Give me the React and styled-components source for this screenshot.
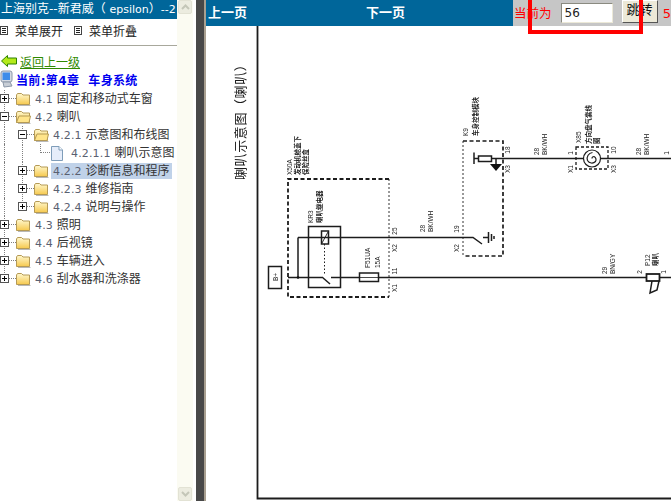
import React from 'react'
import styled, { createGlobalStyle } from 'styled-components'

const CJK = '"Noto Sans CJK SC", sans-serif'
const LATIN = `"DejaVu Sans", ${CJK}`

const GlobalStyle = createGlobalStyle`
  html, body {
    margin: 0;
    padding: 0;
    height: 100%;
    overflow: hidden;
    background: #fff;
    font-family: ${LATIN};
  }
`

const TREE = [
  { id: '4.1', name: '固定和移动式车窗', depth: 0, kind: 'plus', guides: [] },
  { id: '4.2', name: '喇叭', depth: 0, kind: 'minus', open: true, guides: [] },
  { id: '4.2.1', name: '示意图和布线图', depth: 1, kind: 'minus', open: true, guides: [true] },
  { id: '4.2.1.1', name: '喇叭示意图', depth: 2, kind: 'leaf', doc: true, last: true, guides: [true, true] },
  { id: '4.2.2', name: '诊断信息和程序', depth: 1, kind: 'plus', selected: true, guides: [true] },
  { id: '4.2.3', name: '维修指南', depth: 1, kind: 'plus', guides: [true] },
  { id: '4.2.4', name: '说明与操作', depth: 1, kind: 'plus', last: true, guides: [true] },
  { id: '4.3', name: '照明', depth: 0, kind: 'plus', guides: [] },
  { id: '4.4', name: '后视镜', depth: 0, kind: 'plus', guides: [] },
  { id: '4.5', name: '车辆进入', depth: 0, kind: 'plus', guides: [] },
  { id: '4.6', name: '刮水器和洗涤器', depth: 0, kind: 'plus', last: true, guides: [] },
]

function TreeGlyph({ kind, last }) {
  const leaf = kind === 'leaf'
  return (
    <GlyphSvg width={leaf ? 15 : 16} height="18" viewBox={`0 0 ${leaf ? 15 : 16} 18`}>
      <g stroke="#808080" strokeDasharray="1 1" shapeRendering="crispEdges">
        <line x1="4.5" y1="0" x2="4.5" y2={last ? 9 : 18} />
        <line x1="5" y1="8.5" x2={leaf ? 15 : 16} y2="8.5" />
      </g>
      {!leaf && (
        <g shapeRendering="crispEdges">
          <rect x="0.5" y="4.5" width="8" height="8" fill="#fff" stroke="#555" />
          <line x1="2" y1="8.5" x2="7" y2="8.5" stroke="#000" />
          {kind === 'plus' && <line x1="4.5" y1="6" x2="4.5" y2="11" stroke="#000" />}
        </g>
      )}
    </GlyphSvg>
  )
}

function Folder({ open }) {
  return (
    <IconSvg width="15" height="14" viewBox="0 0 15 14">
      <defs>
        <linearGradient id="folderFill" x1="0" y1="0" x2="0" y2="1">
          <stop offset="0" stopColor="#fff8cf" />
          <stop offset="1" stopColor="#f6c94e" />
        </linearGradient>
      </defs>
      <path d="M0.5 3 L1.5 1.5 H5.5 L7 3 H13.5 V12.5 H0.5 Z" fill="url(#folderFill)" stroke="#b59a55" />
      {open && <path d="M0.5 12.5 L3 6 H14.5 L13 12.5 Z" fill="#ffe489" stroke="#b59a55" />}
      <line x1="2" y1="13.5" x2="14.5" y2="13.5" stroke="#b8b8b8" />
    </IconSvg>
  )
}

function DocIcon() {
  return (
    <IconSvg width="13" height="15" viewBox="0 0 13 15">
      <path d="M0.5 0.5 H8 L11.5 4 V14.5 H0.5 Z" fill="#e6edfa" stroke="#7f9db9" />
      <path d="M8 0.5 V4 H11.5" fill="#fff" stroke="#7f9db9" />
    </IconSvg>
  )
}

function MenuIcon() {
  return (
    <svg width="8" height="9" viewBox="0 0 8 9" shapeRendering="crispEdges">
      <rect x="0.5" y="0.5" width="7" height="8" fill="#fff" stroke="#444" />
      <path d="M2 2.5 H6 M2 4.5 H6 M2 6.5 H6" stroke="#222" />
    </svg>
  )
}

function BackArrow() {
  return (
    <svg width="16" height="12" viewBox="0 0 16 12">
      <path d="M0.5 6 L6.5 0.5 V3 H15.5 V9 H6.5 V11.5 Z" fill="#b4ea1a" stroke="#2f8200" />
    </svg>
  )
}

function ComputerIcon() {
  return (
    <svg width="14" height="18" viewBox="0 0 14 18">
      <rect x="1" y="1" width="11" height="11" rx="2" fill="#d5dbe4" stroke="#8c98a8" />
      <rect x="2.5" y="2.5" width="7.5" height="7.5" fill="#3d8cea" />
      <path d="M3 12 L10 12 L12 16 L4 17 Z" fill="#c8ced6" stroke="#8c98a8" />
    </svg>
  )
}

function Rot({ x, y, size = 6.5, bold, middle, children }) {
  return (
    <DiagramText
      transform={`rotate(-90 ${x} ${y})`}
      x={x}
      y={y}
      fontSize={size}
      fontWeight={bold ? 700 : 400}
      textAnchor={middle ? 'middle' : 'start'}
    >
      {children}
    </DiagramText>
  )
}

function Wiring() {
  return (
    <DiagramSvg width="465" height="475" viewBox="206 26 465 475">
      <g fill="none" stroke="#1c1c1c" strokeWidth="1.5">
        {/* sheet frame */}
        <path d="M257.5 26 V498.5 H671" strokeWidth="1.8" />

        {/* fuse block */}
        <path d="M389 179 H288 V297 H389" strokeWidth="1.8" strokeDasharray="4 2.5" />
        <path d="M389 179 V297" strokeWidth="0.9" strokeDasharray="2 2" />
        <rect x="268.5" y="266.5" width="13" height="22" />

        {/* relay */}
        <rect x="308.5" y="226.5" width="32" height="61" />
        <rect x="321.5" y="231" width="7" height="13" />
        <path d="M322 243 L328 232" strokeWidth="0.9" />
        <path d="M324.5 244 V275" strokeWidth="1" strokeDasharray="1.5 2" />
        <path d="M298 237.5 H473 L482 244" />
        <path d="M298 237.5 V277" />
        <path d="M322 277 L330 284" />
        <path d="M288 277.5 H322 M331 277.5 H359 M379 277.5 H646 M660 277.5 H671" />
        <rect x="359.5" y="273" width="19" height="8.5" />
        <path d="M379 277.5 H359" strokeWidth="0.8" />

        {/* body control module */}
        <path d="M463 141 H503 V256 H463" strokeWidth="1.7" strokeDasharray="4 2.5" />
        <path d="M463 141 V256" strokeWidth="0.9" strokeDasharray="2 2" />
        <path d="M474 152.5 V164" />
        <path d="M474 158.5 H478 M491 158.5 H671" />
        <rect x="478.5" y="156" width="13" height="5.5" />
        <path d="M496 158.5 V165" />
        <path d="M483 237.5 H488 M488.5 232 V243 M491.5 234 V241 M494 236 V239" />

        {/* steering wheel coil */}
        <rect x="576" y="147" width="32" height="22" strokeWidth="1.3" strokeDasharray="3 2" />
        <circle cx="592" cy="158.5" r="8.5" fill="#fff" strokeWidth="1.2" />
        <path d="M592 158.5 a2 2 0 0 1 2 -2 a3.5 3.5 0 0 1 1.5 5 a5 5 0 0 1 -8 -1 a6 6 0 0 1 5 -8" strokeWidth="1.2" />

        {/* horn */}
        <rect x="646.5" y="274" width="13" height="7" strokeWidth="1.8" />
        <path d="M652 281 L650 293 L657 290 L659 281" />
      </g>
      <path d="M490 164 H502 L496 171 Z" fill="#111" />
      <circle cx="298" cy="277.5" r="1.3" fill="#111" />

      <DiagramText
        transform="rotate(-90 245 180)"
        x="245"
        y="180"
        fontSize="13"
        letterSpacing="0.6"
      >
        喇叭示意图（喇叭）
      </DiagramText>

      <Rot x={292} y={175}>X50A</Rot>
      <Rot x={300} y={175} bold>发动机舱盖下</Rot>
      <Rot x={308} y={175} bold>保险丝盒</Rot>
      <Rot x={313} y={223}>KR3</Rot>
      <Rot x={322} y={223} bold>喇叭继电器</Rot>
      <Rot x={278} y={277} middle>B+</Rot>
      <Rot x={370} y={268}>F51UA</Rot>
      <Rot x={380} y={268}>15A</Rot>
      <Rot x={397} y={231} middle>25</Rot>
      <Rot x={397} y={248} middle>X2</Rot>
      <Rot x={397} y={271} middle>11</Rot>
      <Rot x={397} y={288} middle>X1</Rot>
      <Rot x={425} y={232}>28</Rot>
      <Rot x={433} y={232}>BK/WH</Rot>
      <Rot x={459} y={229} middle>19</Rot>
      <Rot x={459} y={248} middle>X2</Rot>
      <Rot x={468} y={136}>K9</Rot>
      <Rot x={478} y={136} bold>车身控制模块</Rot>
      <Rot x={510} y={150} middle>18</Rot>
      <Rot x={510} y={169} middle>X3</Rot>
      <Rot x={539} y={155}>28</Rot>
      <Rot x={547} y={155}>BK/WH</Rot>
      <Rot x={573} y={153} middle>1</Rot>
      <Rot x={573} y={169} middle>X1</Rot>
      <Rot x={581} y={143}>X85</Rot>
      <Rot x={591} y={144} bold>方向盘气囊线</Rot>
      <Rot x={599} y={144} bold>圈</Rot>
      <Rot x={616} y={150} middle>10</Rot>
      <Rot x={616} y={169} middle>X3</Rot>
      <Rot x={641} y={155}>28</Rot>
      <Rot x={649} y={155}>BK/WH</Rot>
      <Rot x={669} y={153} middle>1</Rot>
      <Rot x={607} y={274}>29</Rot>
      <Rot x={615} y={274}>BN/GY</Rot>
      <Rot x={642} y={272} middle>2</Rot>
      <Rot x={650} y={266}>P12</Rot>
      <Rot x={658} y={266} bold>喇叭</Rot>
      <Rot x={666} y={272} middle>1</Rot>
    </DiagramSvg>
  )
}

export default function App() {
  return (
    <>
      <GlobalStyle />
      <Page>
        <Sidebar>
          <SideTitle>上海别克--新君威（ <TitleLatin>epsilon</TitleLatin>）<TitleLatin>--2</TitleLatin></SideTitle>
          <MenuBar>
            <MenuItem><MenuIcon />菜单展开</MenuItem>
            <MenuItem><MenuIcon />菜单折叠</MenuItem>
          </MenuBar>
          <BackRow>
            <BackArrow />
            <BackLink>返回上一级</BackLink>
          </BackRow>
          <CurrentRow>
            <ComputerIcon />
            <CurrentText>当前:第4章&nbsp; 车身系统</CurrentText>
          </CurrentRow>
          <Tree>
            {TREE.map(node => (
              <Row key={node.id}>
                {node.guides.map((on, i) => <Guide key={i} $on={on} />)}
                <TreeGlyph kind={node.kind} last={node.last} />
                {node.doc ? <DocIcon /> : <Folder open={node.open} />}
                <Label $selected={node.selected} $doc={node.doc}>
                  <Num>{node.id}</Num> {node.name}
                </Label>
              </Row>
            ))}
          </Tree>
        </Sidebar>

        <Scrollbar>
          <ScrollButton>
            <svg width="9" height="6" viewBox="0 0 9 6">
              <path d="M1 5 L4.5 1.5 L8 5" fill="none" stroke="#c4c6b8" strokeWidth="2" />
            </svg>
          </ScrollButton>
          <ScrollButton>
            <svg width="9" height="6" viewBox="0 0 9 6">
              <path d="M1 1 L4.5 4.5 L8 1" fill="none" stroke="#c4c6b8" strokeWidth="2" />
            </svg>
          </ScrollButton>
        </Scrollbar>
        <FrameGap />
        <Splitter />

        <Main>
          <Toolbar>
            <PageNav>
              <NavLink>上一页</NavLink>
              <NavLink>下一页</NavLink>
            </PageNav>
            <JumpBar>
              <JumpLabel>当前为</JumpLabel>
              <PageInput readOnly value="56" />
              <JumpButton>跳转</JumpButton>
              <TotalText>5</TotalText>
            </JumpBar>
            <RedMark />
          </Toolbar>
          <Sheet>
            <Wiring />
          </Sheet>
        </Main>
      </Page>
    </>
  )
}

const Page = styled.div`
  width: 671px;
  height: 501px;
  display: flex;
  overflow: hidden;
  background: #fff;
`

const Sidebar = styled.div`
  width: 177px;
  flex: none;
  overflow: hidden;
  font-size: 12px;
  color: #333;
`

const SideTitle = styled.div`
  height: 19px;
  line-height: 19px;
  padding-left: 1px;
  background: #00669a;
  color: #fff;
  white-space: nowrap;
  overflow: hidden;
`

const TitleLatin = styled.span`
  font-size: 11px;
`

const MenuBar = styled.div`
  height: 27px;
  display: flex;
  align-items: center;
  gap: 12px;
  padding: 0 0 4px 0;
  box-sizing: border-box;
  border-bottom: 1px solid #a8a89c;
  margin-bottom: 6px;
`

const MenuItem = styled.div`
  display: flex;
  align-items: center;
  gap: 7px;
  color: #222;
  &:last-child { margin-left: -1px; }
`

const BackRow = styled.div`
  height: 18px;
  display: flex;
  align-items: center;
  gap: 3px;
  padding-left: 1px;
`

const BackLink = styled.a`
  color: #2f8a00;
  text-decoration: underline;
`

const CurrentRow = styled.div`
  height: 18px;
  display: flex;
  align-items: center;
  gap: 2px;
`

const CurrentText = styled.span`
  color: #0000f0;
  font-weight: 700;
  letter-spacing: 0.35px;
  white-space: nowrap;
`

const Tree = styled.div`
  display: flex;
  flex-direction: column;
  margin-top: 2px;
`

const Row = styled.div`
  height: 18px;
  display: flex;
  align-items: center;
  white-space: nowrap;
`

const Guide = styled.span`
  flex: none;
  width: 14px;
  height: 18px;
  margin-left: 4px;
  box-sizing: border-box;
  border-left: ${p => (p.$on ? '1px dotted #808080' : 'none')};
`

const GlyphSvg = styled.svg`
  flex: none;
  display: block;
`

const IconSvg = styled.svg`
  flex: none;
  display: block;
`

const Label = styled.span`
  margin-left: ${p => (p.$doc ? '5px' : '2px')};
  padding: 0 2px;
  height: 16px;
  line-height: 16px;
  color: #333;
  background: ${p => (p.$selected ? '#c0d2e9' : 'transparent')};
`

const Num = styled.span`
  font-size: 11px;
  letter-spacing: 0.15px;
  color: #5a6070;
`

const Scrollbar = styled.div`
  width: 16px;
  flex: none;
  display: flex;
  flex-direction: column;
  justify-content: space-between;
  background: #fbfbf2;
`

const ScrollButton = styled.div`
  height: 14px;
  margin: 0 1px;
  display: flex;
  align-items: center;
  justify-content: center;
  background: #ecece0;
  border: 1px solid #e2e2d4;
  border-radius: 2px;
  box-sizing: border-box;
`

const FrameGap = styled.div`
  width: 3px;
  flex: none;
  background: #fff;
`

const Splitter = styled.div`
  width: 8px;
  flex: none;
  background: #484848;
  border-right: 2px solid #a89f90;
`

const Main = styled.div`
  flex: 1;
  min-width: 0;
  display: flex;
  flex-direction: column;
`

const Toolbar = styled.div`
  position: relative;
  height: 26px;
  flex: none;
  display: flex;
`

const PageNav = styled.div`
  width: 307px;
  flex: none;
  display: flex;
  align-items: center;
  gap: 119px;
  padding: 0 0 4px 2px;
  box-sizing: border-box;
  background: #00669a;
`

const NavLink = styled.a`
  color: #fff;
  font-size: 13px;
  font-weight: 700;
`

const JumpBar = styled.div`
  flex: 1;
  display: flex;
  align-items: flex-start;
  background: #c6c6c6;
  white-space: nowrap;
  overflow: hidden;
`

const JumpLabel = styled.span`
  margin: 4px 9px 0 1px;
  color: #f00;
  font-size: 12.5px;
  line-height: 20px;
`

const PageInput = styled.input`
  width: 52px;
  height: 20px;
  margin: 3px 9px 0 0;
  padding: 0 0 0 3px;
  box-sizing: border-box;
  border: 1px solid #8a8a80;
  border-right-color: #ece9d8;
  border-bottom-color: #ece9d8;
  background: #fff;
  color: #222;
  font-family: ${LATIN};
  font-size: 12px;
  outline: none;
`

const JumpButton = styled.button`
  width: 38px;
  height: 23px;
  margin: 0 5px 0 0;
  padding: 0 0 6px;
  box-sizing: border-box;
  background: #ece9d8;
  border: 1px solid #fff;
  border-right-color: #555;
  border-bottom-color: #555;
  color: #111;
  font-family: ${CJK};
  font-size: 13px;
  line-height: 16px;
`

const TotalText = styled.span`
  margin-top: 4px;
  color: #f00;
  font-size: 13px;
  line-height: 20px;
`

const RedMark = styled.div`
  position: absolute;
  left: 322px;
  top: -4px;
  width: 115px;
  height: 38px;
  box-sizing: border-box;
  border: 4px solid #f00;
  pointer-events: none;
`

const Sheet = styled.div`
  flex: 1;
  min-height: 0;
  background: #fff;
`

const DiagramSvg = styled.svg`
  display: block;
  filter: blur(0.25px);
`

const DiagramText = styled.text`
  fill: #1c1c1c;
  font-family: "Liberation Sans", ${CJK};
`
